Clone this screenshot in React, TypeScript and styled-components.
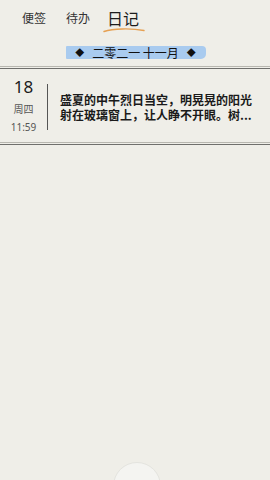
import styled, { createGlobalStyle } from 'styled-components';

const Global = createGlobalStyle`
  html, body {
    margin: 0;
    padding: 0;
    background: #efeee8;
  }
  body {
    font-family: "Noto Sans CJK SC", "Noto Sans", sans-serif;
  }
`;

const Page = styled.div`
  position: relative;
  width: 270px;
  height: 480px;
  overflow: hidden;
  background: #efeee8;
`;

const Tabs = styled.div`
  display: flex;
  align-items: flex-end;
  gap: 20px;
  padding: 5px 0 0 22px;
  height: 24px;
`;

const Tab = styled.div<{ $active?: boolean }>`
  position: relative;
  margin-left: ${p => (p.$active ? '-3px' : '0')};
  font-size: ${p => (p.$active ? '16px' : '12px')};
  line-height: ${p => (p.$active ? '22px' : '18px')};
  color: ${p => (p.$active ? '#1c1c1c' : '#333')};
  padding-bottom: ${p => (p.$active ? '0' : '2px')};
`;

const Squiggle = styled.svg`
  position: absolute;
  left: -4px;
  bottom: -4px;
`;

const MonthRow = styled.div`
  display: flex;
  justify-content: center;
  margin-top: 13px;
  height: 24px;
  padding-left: 1px;
`;

const Highlight = styled.div`
  display: flex;
  align-items: center;
  justify-content: center;
  gap: 8px;
  width: 140px;
  height: 13px;
  margin-top: 4px;
  background: #a9cbef;
  border-radius: 1px 4px 5px 1px;
  font-size: 12px;
  line-height: 13px;
  color: #111;
`;

const Diamond = styled.span`
  font-size: 9px;
`;

const Rule = styled.div`
  height: 1px;
  border-top: 1px solid #b8b7b0;
  border-bottom: 1px solid #6f6f6c;
`;

const Entry = styled.div`
  display: flex;
  align-items: center;
  height: 73px;
`;

const DateCol = styled.div`
  width: 47px;
  display: flex;
  flex-direction: column;
  align-items: center;
  font-family: "Noto Sans", "Noto Sans CJK SC", sans-serif;
`;

const Day = styled.div`
  font-size: 17px;
  line-height: 20px;
  color: #1b1b1b;
`;

const Weekday = styled.div`
  font-family: "Noto Sans CJK SC", sans-serif;
  font-size: 10px;
  line-height: 14px;
  margin-top: 5px;
  color: #555;
`;

const Time = styled.div`
  font-size: 10px;
  line-height: 14px;
  margin-top: 4px;
  color: #555;
`;

const Divider = styled.div`
  width: 1px;
  height: 46px;
  background: #555;
  margin-top: 2px;
`;

const Body = styled.div`
  width: 196px;
  padding: 2px 0 0 12px;
  font-size: 12px;
  line-height: 15px;
  font-weight: 700;
  color: #1a1a1a;
`;

const Fab = styled.div`
  position: absolute;
  left: 113px;
  bottom: -30px;
  width: 46px;
  height: 46px;
  border-radius: 50%;
  background: #f4f4f1;
  border: 1px solid #e4e4df;
`;

export default function App() {
  return (
    <Page>
      <Global />
      <Tabs>
        <Tab>便签</Tab>
        <Tab>待办</Tab>
        <Tab $active>
          日记
          <Squiggle width="42" height="6" viewBox="0 0 42 6">
            <path d="M1 4.5 C10 1.5 28 1 41 3.5" stroke="#e6a052" strokeWidth="1.4" fill="none" strokeLinecap="round" />
          </Squiggle>
        </Tab>
      </Tabs>
      <MonthRow>
        <Highlight>
          <Diamond>◆</Diamond>
          <span>二零二一 十一月</span>
          <Diamond>◆</Diamond>
        </Highlight>
      </MonthRow>
      <Rule />
      <Entry>
        <DateCol>
          <Day>18</Day>
          <Weekday>周四</Weekday>
          <Time>11:59</Time>
        </DateCol>
        <Divider />
        <Body>盛夏的中午烈日当空，明晃晃的阳光射在玻璃窗上，让人睁不开眼。树...</Body>
      </Entry>
      <Rule />
      <Fab />
    </Page>
  );
}
